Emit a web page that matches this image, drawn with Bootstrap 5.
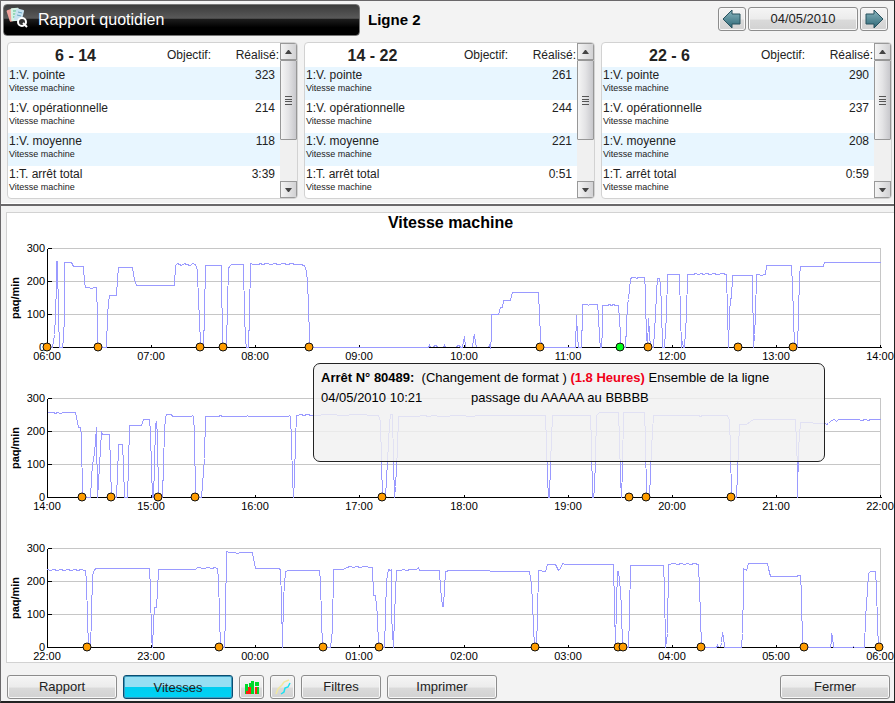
<!DOCTYPE html>
<html lang="fr">
<head>
<meta charset="utf-8">
<meta name="viewport" content="width=device-width, initial-scale=1">
<title>Rapport quotidien</title>
<link rel="stylesheet" href="https://cdn.jsdelivr.net/npm/bootstrap@5.3.0/dist/css/bootstrap.min.css">
<style>
body{font-family:"Liberation Sans",Arial,sans-serif;font-size:13px;line-height:20px;color:#000;background:#f3f3f3}
.window-frame{min-height:100vh;border:1px solid #6a686a;border-right:1px solid #222;border-bottom:2px solid #222}
.top-bar{padding:3px 6px 0 2px}
.day-nav{gap:2px;padding-top:3px}
.title-bar{width:357px;height:32px;color:#fff;font-size:16px;font-weight:400;border:1px solid #777;border-radius:4px;background:linear-gradient(#3c3c3c 0,#595959 44%,#1c1c1c 48%,#000 75%)}
.title-bar svg{margin:0 10px 4px 2px}
.line-name{font-size:15px;font-weight:700;margin-top:6px}
.tool-btn{--bs-btn-padding-x:0;--bs-btn-padding-y:0;--bs-btn-font-size:13px;--bs-btn-color:#222;height:24px;border:1px solid #8c8c8c;border-radius:3px;background:linear-gradient(#f5f5f5 0,#ececec 50%,#dadada 55%,#d2d2d2 100%);box-shadow:inset 0 0 0 1px #f8f8f8;line-height:22px;color:#222}
.tool-btn:hover{color:#000;background:#e8e8e8;border-color:#777}
.tool-btn svg{display:block;margin:auto}
.w-lg-btn{width:110px}.w-md-btn{width:80px}.w-ic-btn{width:25px}
.w-arrow{width:28px}
.tool-btn.is-on{border-color:#0b4d70;background:linear-gradient(#96dff3 0,#96dff3 50%,#00cdf0 52%,#00d2f5 100%);box-shadow:inset 0 0 0 1px #3d9cc0;line-height:24px}
.shifts{display:grid;grid-template-columns:repeat(3,1fr);column-gap:6px;margin:6px 2px 0 6px}
.shift-panel{border:1px solid #d2d2d2;border-radius:4px;background:#fff;height:157px}
.shift-table{table-layout:fixed;font-size:12px;line-height:13px;color:#222}
.shift-table .col-name{width:50%}
.shift-table .col-num{width:25%}
.shift-table th{height:24px;padding:0 1px 0 0;font-weight:400;text-align:right;vertical-align:middle}
.shift-table th:first-child{font-size:16px;font-weight:700;text-align:center}
.shift-table td{height:33px;padding:2px 1px 0;vertical-align:top}
.shift-table td:last-child{padding-right:5px;text-align:right}
.shift-table tbody tr:nth-child(odd){background:#e8f6ff}
.sub-label{display:block;font-size:9px}
.scroll-track{width:17px;background:#f0f0f0}
.scroll-btn{width:17px;height:17px;padding:0;border:1px solid #999;background:linear-gradient(90deg,#f4f4f4,#d2d2d4);line-height:0}
.scroll-thumb{height:80px;border:1px solid #979797;border-radius:1px;background:linear-gradient(90deg,#f5f5f5,#e3e3e5 50%,#c8c8cc)}
.divider{height:3px;margin-top:4px;border-top:1px solid #fff;background:#6a686a}
.chart-panel{margin:6px 0 0 5px;border:1px solid #d2d2d2;border-width:1px 0 1px 1px;background:#fff}
.chart-title{font-size:16px;font-weight:700;line-height:20px;height:25px}
.chart-list{gap:26px}
.chart-list svg{display:block;width:100%;height:auto;overflow:hidden}
.chart-list text{font-size:11px;fill:#000}
.chart-list .axis-name{font-weight:700;text-anchor:middle}
.stop-tip{left:306px;top:150px;width:512px;height:99px;padding:4px 7px;border:1px solid #222;border-radius:7px;background:rgba(240,240,240,.82)}
.tip-date{width:150px}
.tip-red{color:#f00018}
.foot-bar{gap:6px;padding:12px 4px 0 6px}
</style>
<script src="https://cdn.jsdelivr.net/npm/bootstrap@5.3.0/dist/js/bootstrap.bundle.min.js"></script>
</head>
<body>
<div class="window-frame">
  <header class="top-bar d-flex align-items-start">
    <h1 class="title-bar d-flex align-items-center m-0">
      <svg class="flex-shrink-0" width="22" height="22" viewBox="0 0 22 22" aria-hidden="true">
        <rect x="2" y="2" width="8" height="12" rx="1" transform="rotate(-18 6 8)" fill="#f0a09a"/>
        <rect x="5" y="1" width="8" height="13" rx="1" transform="rotate(-3 9 8)" fill="#d5f2e4"/>
        <path d="M7 4h4M7 7h4M7 10h3" stroke="#57b98d"/>
        <rect x="9" y="2" width="8" height="12" rx="1" transform="rotate(14 13 8)" fill="#c8e2f0"/>
        <path d="M12 5l4 1M11 8l4 1" stroke="#6ba6c4"/>
        <circle cx="16" cy="15" r="4" fill="#333" stroke="#fff" stroke-width="2"/>
        <path d="M17 16l4 4" stroke="#fff" stroke-width="2"/>
      </svg>
      <span>Rapport quotidien</span>
    </h1>
    <div class="line-name ms-2">Ligne 2</div>
    <div class="day-nav d-flex ms-auto">
      <button class="btn tool-btn w-arrow" aria-label="Jour précédent"><svg width="20" height="20" viewBox="0 0 20 20" aria-hidden="true"><defs><linearGradient id="teal" x2="0" y2="1"><stop stop-color="#8ab6bf"/><stop offset="1" stop-color="#2c6675"/></linearGradient></defs><path d="M1 10L10 1V5H18V15H10V19Z" fill="url(#teal)" stroke="#28525e"/></svg></button>
      <button class="btn tool-btn w-lg-btn">04/05/2010</button>
      <button class="btn tool-btn w-arrow" aria-label="Jour suivant"><svg width="20" height="20" viewBox="0 0 20 20" aria-hidden="true"><path d="M19 10L10 1V5H2V15H10V19Z" fill="url(#teal)" stroke="#28525e"/></svg></button>
    </div>
  </header>

  <section class="shifts" id="shifts"></section>
  <div class="divider"></div>

  <main class="chart-panel position-relative">
    <h2 class="chart-title text-center m-0">Vitesse machine</h2>
    <div class="chart-list d-flex flex-column" id="charts"></div>
    <div class="stop-tip position-absolute" role="tooltip">
      <div><b>Arrêt N° 80489:</b>&nbsp; (Changement de format ) <b class="tip-red">(1.8 Heures)</b> Ensemble de la ligne</div>
      <div class="d-flex"><span class="tip-date">04/05/2010 10:21</span><span>passage du AAAAA au BBBBB</span></div>
    </div>
  </main>

  <footer class="foot-bar d-flex">
    <button class="btn tool-btn w-lg-btn">Rapport</button>
    <button class="btn tool-btn w-lg-btn is-on" aria-pressed="true">Vitesses</button>
    <button class="btn tool-btn w-ic-btn" aria-label="Histogramme"><svg width="18" height="20" viewBox="0 0 18 18" aria-hidden="true" shape-rendering="crispEdges"><path d="M2 6h3v10H2zM6 5h3v7H6zM8 3h3v13H8zM12 4h4v4h-4z" fill="#00d928"/><path d="M3 13h2v3H3zM5 9h3v7H5zM12 9h2v7h-2z" fill="#f21"/><path d="M14 9h2v7h-2z" fill="#00d928"/></svg></button>
    <button class="btn tool-btn w-ic-btn" aria-label="Courbes"><svg width="18" height="20" viewBox="0 0 18 18" aria-hidden="true"><path d="M2 16L4 11L8 7L10 4L15 2" fill="none" stroke="#f1e8a0" stroke-width="1.5"/><path d="M7 16L10 14L11 10L14 9L16 5" fill="none" stroke="#1ce0f0" stroke-width="1.5"/></svg></button>
    <button class="btn tool-btn w-md-btn">Filtres</button>
    <button class="btn tool-btn w-lg-btn">Imprimer</button>
    <button class="btn tool-btn w-lg-btn ms-auto">Fermer</button>
  </footer>
</div>
<script>
const shifts = [
  ["6 - 14", ["323", "214", "118", "3:39"]],
  ["14 - 22", ["261", "244", "221", "0:51"]],
  ["22 - 6", ["290", "237", "208", "0:59"]]
];
const names = ["1:V. pointe", "1:V. opérationnelle", "1:V. moyenne", "1:T. arrêt total"];
document.getElementById("shifts").innerHTML = shifts.map(([title, values]) => `
  <div class="shift-panel d-flex overflow-hidden">
    <table class="shift-table flex-fill w-100 align-self-start">
      <colgroup><col class="col-name"><col class="col-num"><col class="col-num"></colgroup>
      <thead><tr><th scope="col">${title}</th><th scope="col">Objectif:</th><th scope="col">Réalisé:</th></tr></thead>
      <tbody>${names.map((n, i) => `<tr><td colspan="2">${n}<span class="sub-label">Vitesse machine</span></td><td>${values[i]}</td></tr>`).join("")}</tbody>
    </table>
    <div class="scroll-track d-flex flex-column flex-shrink-0">
      <button class="scroll-btn" aria-label="Monter"><svg width="7" height="4"><path d="M0 4L3 0H4L7 4Z" fill="#444"/></svg></button>
      <div class="scroll-thumb d-flex align-items-center justify-content-center"><svg width="7" height="9" shape-rendering="crispEdges"><path d="M0 0h7v1H0zM0 3h7v1H0zM0 5h7v1H0zM0 8h7v1H0z" fill="#555"/></svg></div>
      <button class="scroll-btn mt-auto" aria-label="Descendre"><svg width="7" height="4"><path d="M0 0H7L4 4H3Z" fill="#444"/></svg></button>
    </div>
  </div>`).join("");

/* Each series: points "x,y" with the zero axis at y=109 and 300 at y=10. */
const charts = [
  { hours: ["06:00","07:00","08:00","09:00","10:00","11:00","12:00","13:00","14:00"],
    line: "47,109 52,109 54,96 55,77 56,45 56,23 57,23 57,45 58,55 58,77 59,109 62,109 63,100 64,77 64,24 71,24 73,28 83,28 84,44 85,49 89,49 90,50 92,50 93,49 96,49 97,77 97,109 106,109 107,76 108,65 109,57 116,57 117,40 118,29 132,29 134,41 136,47 174,47 175,27 177,25 179,26 181,27 184,25 186,26 190,27 192,25 195,26 197,32 198,65 199,77 200,109 203,109 204,76 205,27 221,27 222,109 226,109 227,65 228,30 229,28 231,26 243,26 244,76 245,101 246,109 248,109 249,76 250,25 253,26 258,26 260,25 262,26 266,25 271,26 274,25 278,26 283,25 287,26 291,25 295,26 300,26 304,27 306,33 307,44 308,66 309,100 310,109 428,109 429,107 430,109M433,109 434,107 436,107 437,109M443,109 444,107 445,109M456,109 457,107 459,107 460,109 462,109 463,103 464,98 465,109M472,109 473,100 474,96 475,104 476,109M488,109 489,107 490,109 491,99 491,76 498,76 500,69 502,69 503,62 510,62 512,54 538,54 539,77 540,98 541,109 575,109 576,77 577,98 578,109 581,109 582,76 582,66 587,66 588,67 589,66 597,66 598,77 599,99 600,109 601,109 602,90 602,67 607,67 609,66 611,67 613,66 615,67 618,67 620,95 620,109 625,109 627,66 628,61 630,41 631,39 635,39 636,40 638,39 644,39 645,52 645,66 646,95 647,109 648,80 649,95 650,109 653,109 655,77 656,54 657,40 659,40 660,47 661,68 662,109 664,109 666,77 667,36 679,36 680,77 681,109 682,103 683,109 684,109 686,77 687,36 693,36 695,35 698,36 701,35 703,36 706,35 710,36 713,35 717,36 722,35 726,36 727,73 728,109 729,76 730,60 731,60 732,37 752,37 753,109 754,96 755,77 756,36 759,36 760,37 765,36 766,27 791,27 792,48 793,77 794,109 797,109 798,77 799,38 800,28 823,28 824,24 880,24",
    stops: [47,98,200,223,309,540,648,738,793], current: 620 },
  { hours: ["14:00","15:00","16:00","17:00","18:00","19:00","20:00","21:00","22:00"],
    line: "47,24 53,24 55,25 57,24 60,25 63,24 75,24 77,34 78,39 80,39 81,48 82,109 90,109 91,90 92,76 94,65 95,52 96,39 97,109 98,95 100,60 101,44 102,46 109,46 110,77 111,109 116,109 118,61 118,56 122,56 123,77 124,109 127,109 128,77 129,37 141,37 143,31 149,31 150,44 151,80 152,109 153,109 154,77 155,37 156,33 157,47 158,109 162,109 163,76 164,43 165,29 166,26 171,26 172,28 191,28 192,27 193,28 194,44 195,109 201,109 204,70 205,28 218,28 220,27 222,28 246,28 247,27 248,28 288,28 289,27 290,28 291,53 292,90 293,109 294,90 295,52 296,27 301,26 303,27 307,26 311,27 330,26 342,27 355,26 378,27 380,33 381,73 382,109 385,109 387,73 389,35 390,26 392,26 393,73 394,109 395,98 397,60 398,28 416,28 424,27 428,28 433,27 440,28 460,27 470,28 480,27 545,27 546,55 547,90 548,109 549,109 550,75 552,27 590,27 591,55 592,109 593,109 594,100 595,70 596,27 599,24 618,24 619,50 620,90 621,109 622,80 623,24 644,24 645,50 646,109 649,109 651,60 653,27 698,27 700,28 702,27 727,27 729,32 730,60 731,109 736,109 738,60 739,36 746,36 750,33 753,31 795,31 797,80 797,109 798,60 800,34 825,35 826,36 828,35 831,32 834,31 836,33 838,31 858,31 861,32 865,31 868,32 870,31 880,31",
    stops: [82,111,158,195,382,629,646,731] },
  { hours: ["22:00","23:00","00:00","01:00","02:00","03:00","04:00","05:00","06:00"],
    line: "47,31 50,32 53,31 57,32 60,31 64,32 67,31 71,32 74,31 78,32 80,31 85,32 86,43 87,80 88,109 90,109 91,78 92,37 94,31 96,30 149,30 150,50 151,99 152,109 153,85 154,69 156,69 157,52 158,31 195,31 197,29 204,30 207,29 212,30 214,29 217,30 218,40 219,77 220,109 224,109 225,77 226,13 229,14 234,14 237,15 240,14 252,14 253,20 255,30 278,30 280,31 281,62 282,109 283,60 285,33 288,32 319,32 320,43 321,80 322,109 330,109 332,91 333,31 343,31 346,29 350,28 353,29 356,28 360,29 363,28 372,29 373,57 375,57 377,77 378,109 384,109 385,77 386,42 388,31 390,32 391,31 391,77 393,109 394,77 396,32 400,32 403,31 406,32 410,31 416,31 418,29 419,32 439,32 440,50 442,68 443,68 444,50 445,33 449,32 529,33 531,45 532,65 534,109 536,109 537,77 538,32 545,33 547,26 555,26 558,32 560,30 562,25 565,26 613,26 614,68 615,109 616,65 617,33 618,33 620,52 621,70 622,109 628,109 629,77 630,27 663,27 664,50 665,109 667,95 668,26 674,25 677,26 681,25 684,26 687,25 690,26 694,25 698,26 699,50 700,77 701,109 716,109 717,107 718,109M720,109 721,104 722,94 723,98 724,109 741,109 742,95 743,50 743,30 746,32 748,25 767,25 768,30 770,38 794,38 800,37 801,55 802,109 830,109 831,103 831,95 832,98 833,109 852,109 853,108 854,109 864,109 865,80 867,52 868,35 870,33 875,33 876,50 877,85 878,109",
    stops: [87,219,323,379,535,618,623,701,804,879] }
];
const ticks = [47,151,255,359,464,568,672,776,880];
document.getElementById("charts").innerHTML = charts.map(c => `
  <svg viewBox="7 0 887 124" role="img" aria-label="Vitesse machine ${c.hours[0]} à ${c.hours[8]}">
    <g transform="translate(.5 .5)" fill="none" shape-rendering="crispEdges">
      <path d="M47,10H880V109M47,43H880M47,76H880" stroke="#c6c6c6"/>
      <path d="M47,109V10M47,10h4M47,43h4M47,76h4M47,109H881${ticks.map(x => `M${x},109v-3`).join("")}" stroke="#000"/>
      <path d="M${c.line}" stroke="#9a9aff"/>
    </g>
    ${[300,200,100,0].map((v, i) => `<text x="45" y="${14 + 33 * i}" text-anchor="end">${v}</text>`).join("")}
    <text class="axis-name" transform="translate(19 60) rotate(-90)">paq/min</text>
    ${c.hours.map((h, i) => `<text x="${ticks[i]}" y="122" text-anchor="middle">${h}</text>`).join("")}
    <g stroke="#111">${c.stops.map(x => `<circle cx="${x}" cy="109" r="4" fill="#ff9c00"/>`).join("")}${c.current ? `<circle cx="${c.current}" cy="109" r="4" fill="#00ff18"/>` : ""}</g>
  </svg>`).join("");
</script>
</body>
</html>
